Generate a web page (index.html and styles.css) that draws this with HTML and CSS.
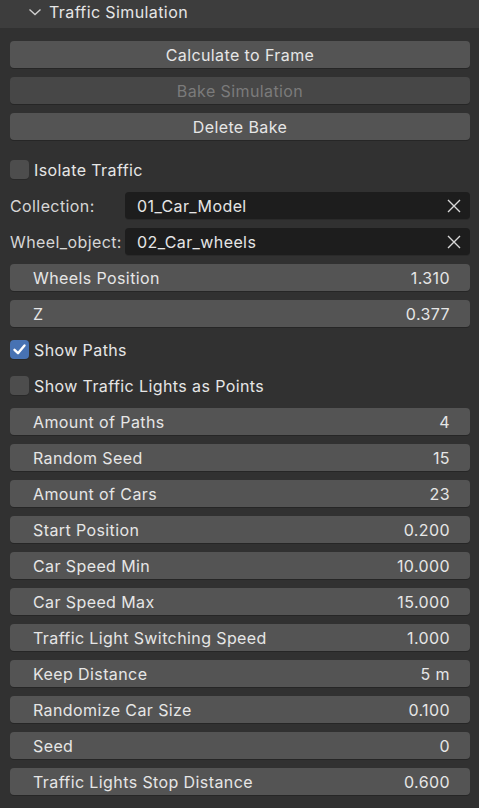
FILE: index.html
```html
<!DOCTYPE html>
<html>
<head>
<meta charset="utf-8">
<link rel="stylesheet" href="styles.css">
</head>
<body>
<div class="panel">
  <div class="header">
    <svg class="chev" width="14" height="10" viewBox="0 0 14 10"><path d="M1.5 2.5 L7 7.5 L12.5 2.5" fill="none" stroke="#cfcfcf" stroke-width="1.4"/></svg>
    <span>Traffic Simulation</span>
  </div>
  <div class="body">
    <div class="group">
      <div class="btn">Calculate to Frame</div>
      <div class="btn disabled">Bake Simulation</div>
      <div class="btn">Delete Bake</div>
    </div>
    <div class="group rows">
      <div class="check"><span class="box"></span><span>Isolate Traffic</span></div>
      <div class="prop"><span class="plabel">Collection:</span><div class="field"><span>01_Car_Model</span><svg class="x" width="14" height="14" viewBox="0 0 14 14"><path d="M1 1 L13 13 M13 1 L1 13" stroke="#d8d8d8" stroke-width="1.4" fill="none"/></svg></div></div>
      <div class="prop"><span class="plabel">Wheel_object:</span><div class="field"><span>02_Car_wheels</span><svg class="x" width="14" height="14" viewBox="0 0 14 14"><path d="M1 1 L13 13 M13 1 L1 13" stroke="#d8d8d8" stroke-width="1.4" fill="none"/></svg></div></div>
      <div class="num"><span>Wheels Position</span><span>1.310</span></div>
      <div class="num"><span>Z</span><span>0.377</span></div>
      <div class="check"><span class="box on"><svg width="19" height="19" viewBox="0 0 19 19"><path d="M4.5 9.8 L8 13.2 L14.5 5.5" fill="none" stroke="#fff" stroke-width="2.4" stroke-linecap="round" stroke-linejoin="round"/></svg></span><span>Show Paths</span></div>
      <div class="check"><span class="box"></span><span>Show Traffic Lights as Points</span></div>
      <div class="num"><span>Amount of Paths</span><span>4</span></div>
      <div class="num"><span>Random Seed</span><span>15</span></div>
      <div class="num"><span>Amount of Cars</span><span>23</span></div>
      <div class="num"><span>Start Position</span><span>0.200</span></div>
      <div class="num"><span>Car Speed Min</span><span>10.000</span></div>
      <div class="num"><span>Car Speed Max</span><span>15.000</span></div>
      <div class="num"><span>Traffic Light Switching Speed</span><span>1.000</span></div>
      <div class="num"><span>Keep Distance</span><span>5 m</span></div>
      <div class="num"><span>Randomize Car Size</span><span>0.100</span></div>
      <div class="num"><span>Seed</span><span>0</span></div>
      <div class="num"><span>Traffic Lights Stop Distance</span><span>0.600</span></div>
    </div>
  </div>
</div>
</body>
</html>
```
FILE: styles.css
```css
html, body {
  margin: 0;
  padding: 0;
  background: #303030;
}
body {
  width: 479px;
  height: 808px;
  overflow: hidden;
  font-family: Inter, "Noto Sans", sans-serif;
  font-size: 16px;
  letter-spacing: 0.4px;
  color: #e6e6e6;
}
.panel {
  display: flex;
  flex-direction: column;
}
.header {
  height: 28px;
  background: #3d3d3d;
  display: flex;
  align-items: center;
  padding-left: 28px;
  gap: 7px;
  color: #e6e6e6;
  box-sizing: border-box;
  padding-bottom: 4px;
}
.chev { display: block; }
.body {
  background: #313131;
  padding: 13px 9px 12px 10px;
  display: flex;
  flex-direction: column;
  gap: 16px;
}
.group {
  display: flex;
  flex-direction: column;
  gap: 9px;
}
.btn {
  height: 27px;
  background: #545454;
  border-radius: 4px;
  box-shadow: 0 1px 0 #262626;
  display: flex;
  align-items: center;
  justify-content: center;
}
.btn.disabled {
  background: #474747;
  color: #7b7b7b;
}
.check {
  height: 27px;
  display: flex;
  align-items: center;
  gap: 5px;
}
.box {
  width: 19px;
  height: 19px;
  border-radius: 4px;
  background: #4d4d4d;
  box-shadow: 0 1px 0 #292929;
  display: block;
}
.box.on {
  background: #4772b3;
}
.box svg { display: block; }
.prop {
  height: 27px;
  display: flex;
  align-items: center;
}
.plabel {
  width: 115px;
  color: #d6d6d6;
}
.field {
  flex: 1;
  height: 27px;
  background: #1d1d1d;
  border-radius: 4px;
  box-shadow: 0 1px 0 #2a2a2a;
  display: flex;
  align-items: center;
  justify-content: space-between;
  padding: 0 9px 0 12px;
}
.x { display: block; }
.num {
  height: 27px;
  background: #545454;
  border-radius: 4px;
  box-shadow: 0 1px 0 #262626;
  display: flex;
  align-items: center;
  justify-content: space-between;
  padding: 0 20px 0 23px;
}
```
